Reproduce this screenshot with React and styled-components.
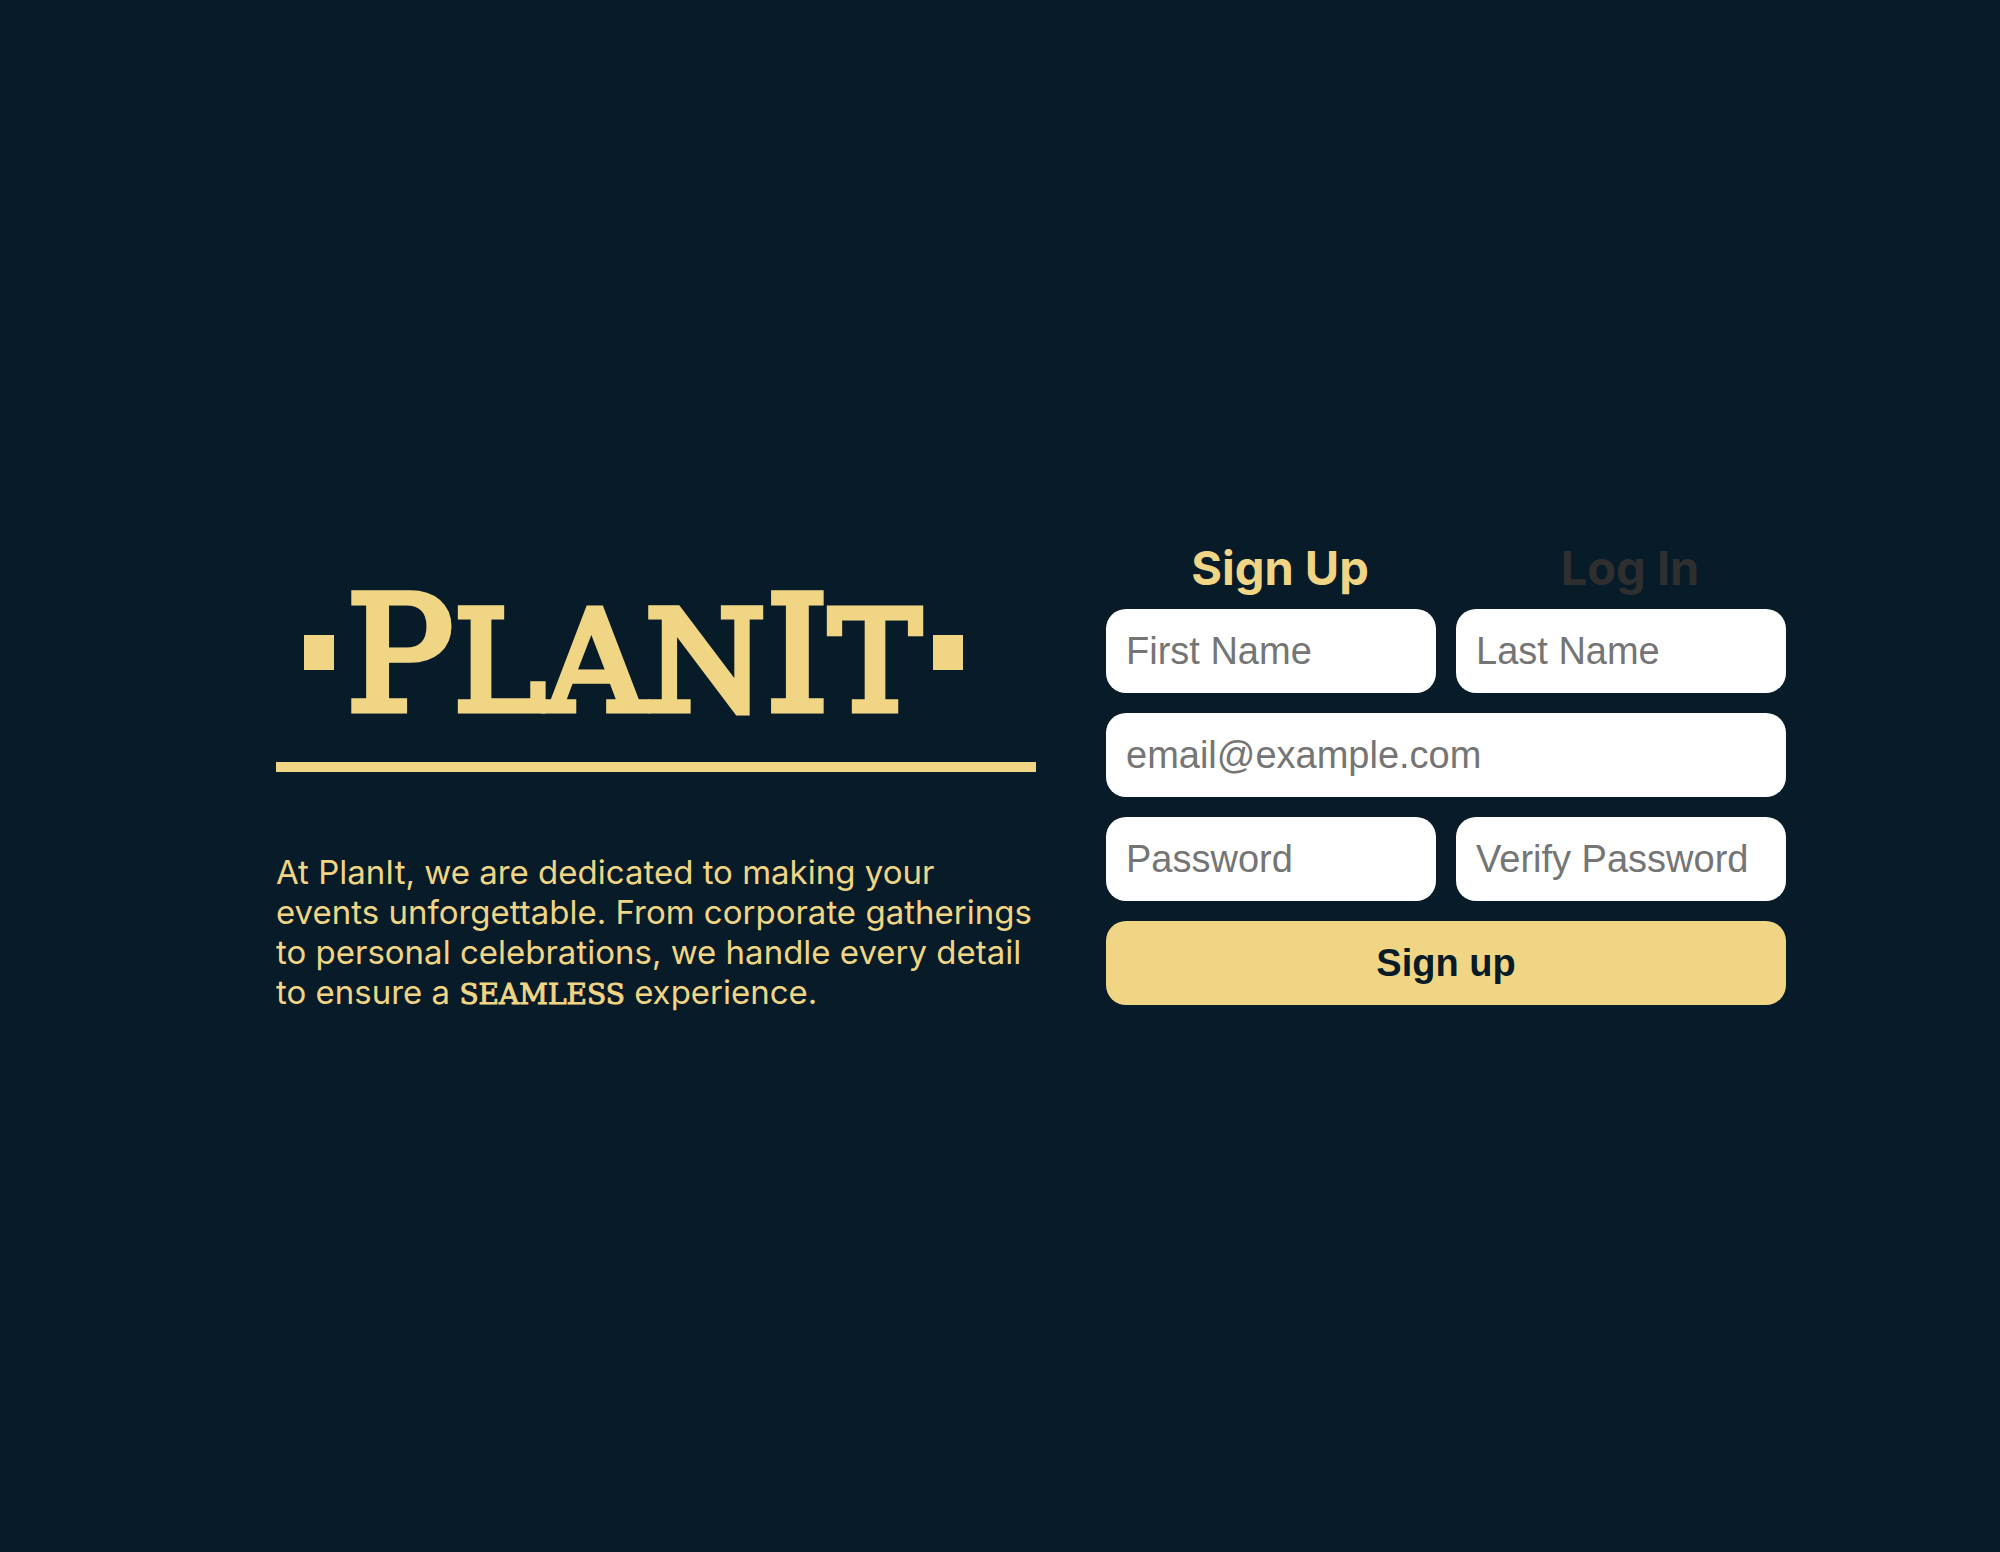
import React, { useState } from "react";
import styled, { createGlobalStyle } from "styled-components";

const navy = "#071b28";
const gold = "#f0d585";

const GlobalStyle = createGlobalStyle`
  *, *::before, *::after { box-sizing: border-box; }
  body {
    margin: 0;
    background: ${navy};
    color: ${gold};
    font-family: Inter, "Liberation Sans", sans-serif;
  }
`;

const Page = styled.main`
  min-height: 100vh;
  display: flex;
  flex-wrap: wrap;
  align-items: center;
  justify-content: center;
  gap: 70px;
  padding-left: 62px;
`;

const Intro = styled.section`
  flex: 0 1 760px;
  min-width: 0;
`;

const Wordmark = styled.h1`
  margin: 0;
  padding: 34px 16px 19px;
  font-family: "DejaVu Serif", serif;
  font-weight: 400;
  font-size: 138px;
  line-height: 160px;
  white-space: nowrap;
  -webkit-text-stroke: 7px ${gold};
`;

const Capital = styled.span`
  font-size: 160px;
`;

const Dot = styled.span`
  display: inline-block;
  width: 30px;
  height: 35px;
  margin: 0 12px 40px;
  background: ${gold};
`;

const Rule = styled.hr`
  height: 10px;
  margin: 0 0 80px;
  border: 0;
  background: ${gold};
`;

const Pitch = styled.p`
  margin: 0;
  font-size: 33px;
  line-height: 40px;
`;

const Emphasis = styled.strong`
  font-family: "DejaVu Serif", serif;
  font-weight: 400;
  font-size: 28px;
  line-height: 1;
  -webkit-text-stroke: 1px ${gold};
`;

const Account = styled.section`
  flex: 0 1 680px;
  min-width: 0;
  padding-bottom: 10px;
`;

const Tabs = styled.div`
  display: grid;
  grid-template-columns: 1fr 1fr;
  gap: 38px;
  margin-bottom: 10px;
  padding-left: 18px;
`;

const Tab = styled.button`
  padding: 0;
  border: 0;
  background: none;
  color: ${({ $active }) => ($active ? gold : "#2f2f2f")};
  font: 700 47px/62px Inter, "Liberation Sans", sans-serif;
  cursor: pointer;
`;

const Form = styled.form`
  display: grid;
  grid-template-columns: 1fr 1fr;
  gap: 20px;
`;

const Input = styled.input`
  grid-column: ${({ $wide }) => ($wide ? "1 / -1" : "auto")};
  width: 100%;
  height: 84px;
  padding: 0 20px;
  border: 0;
  border-radius: 20px;
  background: #fff;
  color: ${navy};
  font: 400 38px/44px "Liberation Sans", Arial, sans-serif;
  &::placeholder { color: #757575; opacity: 1; }
`;

const Submit = styled.button`
  grid-column: 1 / -1;
  height: 84px;
  border: 0;
  border-radius: 20px;
  background: ${gold};
  color: ${navy};
  font: 700 38px/44px "Liberation Sans", Arial, sans-serif;
  cursor: pointer;
`;

const fields = [
  { id: "first-name", type: "text", text: "First Name" },
  { id: "last-name", type: "text", text: "Last Name" },
  { id: "email", type: "email", text: "email@example.com", label: "Email", wide: true },
  { id: "password", type: "password", text: "Password" },
  { id: "verify-password", type: "password", text: "Verify Password" },
];

export default function App() {
  const [tab, setTab] = useState("Sign Up");
  return (
    <>
      <GlobalStyle />
      <Page>
        <Intro>
          <Wordmark>
            <Dot />
            <Capital>P</Capital>LAN<Capital>I</Capital>T
            <Dot />
          </Wordmark>
          <Rule />
          <Pitch>
            At PlanIt, we are dedicated to making your events unforgettable. From
            corporate gatherings to personal celebrations, we handle every detail to
            ensure a <Emphasis>SEAMLESS</Emphasis> experience.
          </Pitch>
        </Intro>
        <Account>
          <Tabs>
            {["Sign Up", "Log In"].map((name) => (
              <Tab key={name} type="button" $active={tab === name} onClick={() => setTab(name)}>
                {name}
              </Tab>
            ))}
          </Tabs>
          <Form onSubmit={(e) => e.preventDefault()}>
            {fields.map(({ id, type, text, label, wide }) => (
              <Input
                key={id}
                id={id}
                type={type}
                placeholder={text}
                aria-label={label || text}
                $wide={wide}
              />
            ))}
            <Submit type="submit">Sign up</Submit>
          </Form>
        </Account>
      </Page>
    </>
  );
}
